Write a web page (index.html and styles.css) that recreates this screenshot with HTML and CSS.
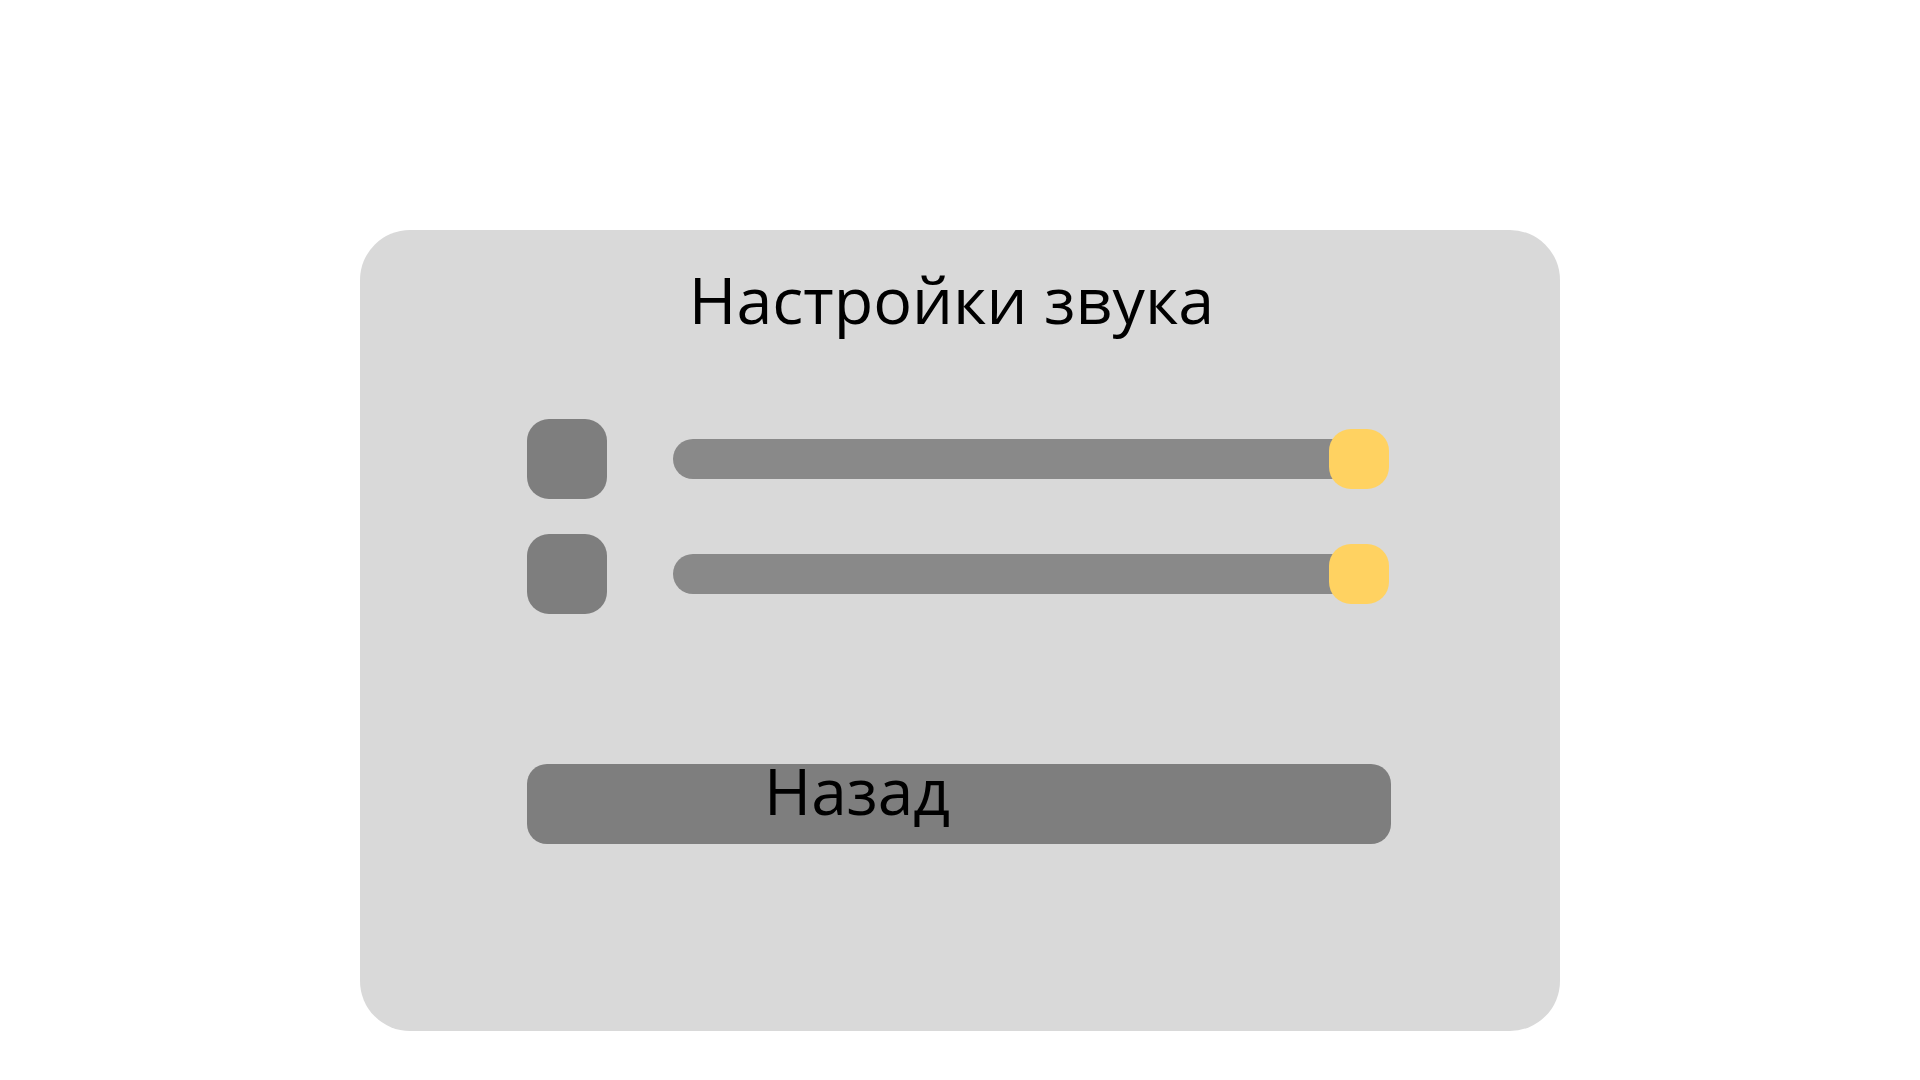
FILE: index.html
```html
<!DOCTYPE html>
<html lang="ru">
<head>
<meta charset="utf-8">
<title>Настройки звука</title>
<link rel="stylesheet" href="styles.css">
</head>
<body>
<div class="panel">
  <h1 class="title">Настройки звука</h1>
  <div class="rows">
    <div class="row">
      <div class="toggle"></div>
      <div class="slider"><div class="track"></div><div class="knob"></div></div>
    </div>
    <div class="row">
      <div class="toggle"></div>
      <div class="slider"><div class="track"></div><div class="knob"></div></div>
    </div>
  </div>
  <div class="back">Назад</div>
</div>
</body>
</html>
```

FILE: styles.css
```css
html, body {
  margin: 0;
  padding: 0;
  background: #ffffff;
}
body {
  font-family: "Open Sans", "Noto Sans", sans-serif;
  color: #000;
}
.panel {
  box-sizing: border-box;
  width: 1200px;
  height: 801px;
  margin: 230px 0 0 360px;
  background: #d9d9d9;
  border-radius: 50px;
  padding-top: 25px;
  display: flex;
  flex-direction: column;
}
.title {
  margin: 0;
  font-size: 64.6px;
  font-weight: 400;
  line-height: 88px;
  text-align: center;
  padding-right: 17px;
}
.rows {
  margin: 76px 0 0 167px;
  display: flex;
  flex-direction: column;
  gap: 35px;
}
.row {
  display: flex;
  align-items: center;
  gap: 66px;
  height: 80px;
}
.toggle {
  width: 80px;
  height: 80px;
  border-radius: 22px;
  background: #7e7e7e;
}
.slider {
  position: relative;
  width: 716px;
  height: 60px;
  display: flex;
  align-items: center;
}
.track {
  width: 100%;
  height: 40px;
  border-radius: 20px;
  background: #898989;
}
.knob {
  position: absolute;
  right: 0;
  top: 0;
  width: 60px;
  height: 60px;
  border-radius: 22px;
  background: #ffd261;
}
.back {
  box-sizing: border-box;
  margin: 150px 0 0 167px;
  width: 864px;
  height: 80px;
  border-radius: 20px;
  background: #7e7e7e;
  font-size: 64px;
  line-height: 54px;
  padding-left: 237px;
}
```
